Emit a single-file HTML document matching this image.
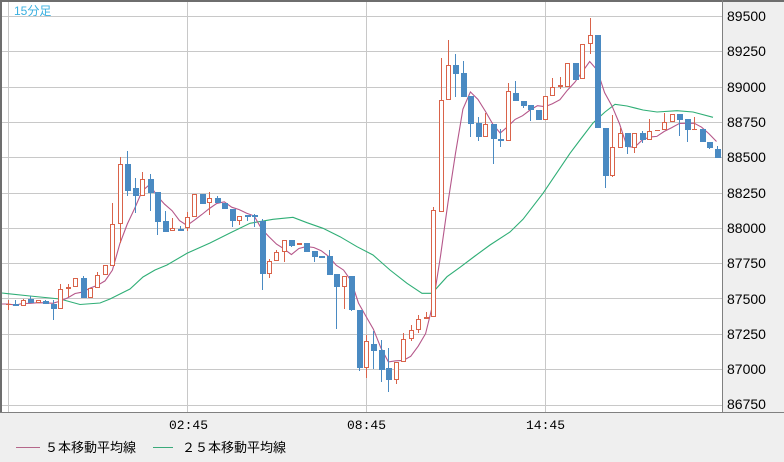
<!DOCTYPE html>
<html><head><meta charset="utf-8"><style>
html,body{margin:0;padding:0;width:784px;height:462px;overflow:hidden;background:#efefef;font-family:"Liberation Sans","Noto Sans CJK JP",sans-serif;}
svg{position:absolute;left:0;top:0}
</style></head><body>
<svg id="s" width="784" height="462" xmlns="http://www.w3.org/2000/svg">
<rect x="0" y="0" width="784" height="462" fill="#efefef"/>
<rect x="2" y="2" width="720" height="410" fill="#ffffff"/>
<g id="grid" stroke="#c8c8c8" stroke-width="1"></g>
<g id="ma"></g>
<g id="c"></g>
<line x1="0" y1="1" x2="784" y2="1" stroke="#6e6e6e" stroke-width="2"/>
<line x1="1" y1="0" x2="1" y2="412" stroke="#6e6e6e" stroke-width="2"/>
<line x1="722.5" y1="0" x2="722.5" y2="412" stroke="#808080" stroke-width="1"/>
<line x1="0" y1="412.5" x2="784" y2="412.5" stroke="#808080" stroke-width="1"/>
<text x="14" y="15" font-size="12" fill="#3ab0e0">15分足</text>
<g font-size="14" fill="#000" font-family="Liberation Sans, sans-serif">
<text x="727" y="21">89500</text><text x="727" y="56">89250</text><text x="727" y="92">89000</text>
<text x="727" y="127">88750</text><text x="727" y="162">88500</text><text x="727" y="198">88250</text>
<text x="727" y="233">88000</text><text x="727" y="268">87750</text><text x="727" y="304">87500</text>
<text x="727" y="339">87250</text><text x="727" y="374">87000</text><text x="727" y="409">86750</text>
</g>
<g font-size="13" fill="#000" font-family="Liberation Mono, monospace">
<text x="169" y="429">02:45</text><text x="347" y="429">08:45</text><text x="526" y="429">14:45</text>
</g>
<line x1="16" y1="447.5" x2="40" y2="447.5" stroke="#b5678a" stroke-width="1"/>
<text x="45" y="452" font-size="13" fill="#000">５本移動平均線</text>
<line x1="153" y1="447.5" x2="173" y2="447.5" stroke="#3aaa7a" stroke-width="1"/>
<text x="182" y="452" font-size="13" fill="#000">２５本移動平均線</text>
</svg>
<script>
var NS="http://www.w3.org/2000/svg";
function el(p,t,a){var e=document.createElementNS(NS,t);for(var k in a)e.setAttribute(k,a[k]);p.appendChild(e);return e;}
var g=document.getElementById('grid');
[16.5,51.5,87.5,122.5,157.5,193.5,228.5,263.5,298.5,334.5,369.5,405.5].forEach(function(y){el(g,'line',{x1:2,x2:722,y1:y,y2:y});});
[8.5,187.5,366.5,545.5].forEach(function(x){el(g,'line',{x1:x,x2:x,y1:2,y2:412});});
var D=[
[305,304,300,310],[303.7,306.3,300,306.3],[306,300,299,306],[299,303,296,303],[303,300.3,300,303],[300.7,304.3,300,304.3],[304,308.7,300,319.7],[308.7,289.3,284,308.7],[289,287,284,296.7],[287,278,278,287],
[278,297.7,276,297.7],[297.7,288.3,288.3,297.7],[288.3,275.3,272,288.3],[275.3,265.3,265.3,275.3],[265.7,224.3,203.3,265.7],[224.3,164.3,156.7,243.3],[164,190.7,151,196],[188.3,195.7,177.7,213.3],[195.7,179.3,172,195.7],[179.3,192.7,174,211],
[192,221.7,192,234.7],[221,231.7,211,231.7],[231.3,228.3,218,231.3],[228.7,228.7,226,231.3],[228.3,217.3,212,231.3],[217.3,194.3,194.3,217.3],[194.3,204,194.3,204],[203.3,198.3,192,214.7],[198.3,203.3,196,203.3],[203.3,209.3,203.3,209.3],
[209,221.3,209,226.7],[221.3,215.7,215.7,225.3],[215.3,216.7,215.3,221.3],[215.3,216.7,213.7,226.7],[220.7,274,219,290],[273.7,261,258.7,277.7],[261.3,252,250,261.3],[252,240.3,240.3,262],[240.3,245.7,240.3,247],[245.3,243.3,243.3,245.3],
[243,251.7,243,251.7],[251,256.7,251,261.7],[256.3,256.3,256.3,257],[256,274.7,250,274.7],[274,286.7,274,329],[286.7,276.3,276.3,309],[276,310,276,311],[309.7,367.7,309.7,371],[367.7,341.3,334.7,377.7],[344,350.7,331,369.3],
[350,369.7,340.3,382],[368,380,348.3,391.7],[379.7,362.3,362.3,384.3],[362.3,339.3,332.7,362.3],[339.3,330.3,325,341],[330.3,319.3,314.7,333.3],[319.3,317,312,319.3],[317.3,210.3,206.7,317.3],[211.7,100.3,57.7,211.7],[100.3,65,40,100.3],
[65,73.7,53.7,96.7],[73,96.7,60.7,96.7],[96.3,123.7,96.3,136.7],[123,137.3,116.7,140.7],[137.3,124.3,113.3,137.3],[124.3,139,124.3,163.7],[138.7,141.3,129,146.7],[141.3,91.3,83,141.3],[93,101.3,81,101.3],[101,105.7,101,108.3],
[105,110.3,105,120.7],[110,119.7,110,119.7],[119.7,96.3,96.3,119.7],[96.3,86.7,78.3,96.3],[86.7,85.3,77.3,89],[86.7,63,63,86.7],[63,80,63,80],[79.3,44,44,79.3],[44,35.3,17.7,54.3],[35.3,128.3,35.3,128.3],
[128.3,176,128.3,187.7],[176,147.3,114.7,177],[147.7,133.3,127.7,147.7],[133.3,147.3,133.3,154.3],[148.3,133.3,133.3,152.7],[133.3,140.3,131.3,142.7],[140.3,131.3,119.3,140.3],[131.3,129.7,129.7,131.3],[129.7,122.3,112.7,129.7],[122.3,114.3,114.3,122.3],
[114.3,119.7,114.3,136.3],[119.3,130.3,119.3,142.3],[130.3,129.3,117,130.3],[129.3,142.3,129.3,142.3],[142.3,147.7,142.3,149.3],[149.3,157.7,146,157.7]
];
var cg=document.getElementById('c'),mg=document.getElementById('ma');
function X(i){return 8+7.458*i;}
var G=[[2,293],[8,293.7],[30,296],[60,299],[80,304.5],[100,303],[110,299],[120,294],[130,289],[143,277],[155,270],[167,265],[187,253.3],[210,243],[230,233],[250,223.3],[273,219.3],[293,217.3],[307,222.7],[323,228.3],[340,236.7],[357,246.7],[373,255],[390,270],[407,283.3],[422,293.3],[432,293.3],[447,276.7],[460,267.3],[475,256],[490,245],[510,232],[523,219.3],[543,193.3],[570,153.3],[580,140],[593,123],[605,112],[615,104.3],[627,106],[643,110],[657,112],[677,110.7],[693,112],[713,117.3]];
el(mg,'polyline',{points:G.map(function(p){return p.join(',')}).join(' '),fill:'none',stroke:'#2fae76','stroke-width':1.1});
var P=[];
for(var i=0;i<D.length;i++){var s=0,n=0;for(var j=Math.max(0,i-4);j<=i;j++){s+=D[j][1];n++;}P.push([X(i),s/n]);}
P.unshift([2,P[0][1]]);
el(mg,'polyline',{points:P.map(function(p){return p[0].toFixed(1)+','+p[1].toFixed(1)}).join(' '),fill:'none',stroke:'#b5578a','stroke-width':1.1});
D.forEach(function(d,i){
 var x=Math.round(X(i)),o=d[0],c=d[1],h=Math.round(d[2]),l=Math.round(d[3]);
 var up=c<o, col=up?'#d9634a':'#4a8ac2';
 var top=Math.round(Math.min(o,c)),bot=Math.round(Math.max(o,c));
 el(cg,'line',{x1:x+0.5,x2:x+0.5,y1:h,y2:l,stroke:col,'stroke-width':1});
 if(up){el(cg,'rect',{x:x-1.5,y:top+0.5,width:4,height:Math.max(bot-top-1,0.01),fill:'#fff',stroke:col,'stroke-width':1});}
 else{el(cg,'rect',{x:x-2,y:top,width:6,height:Math.max(bot-top,2),fill:col});}
});
</script>
</body></html>
